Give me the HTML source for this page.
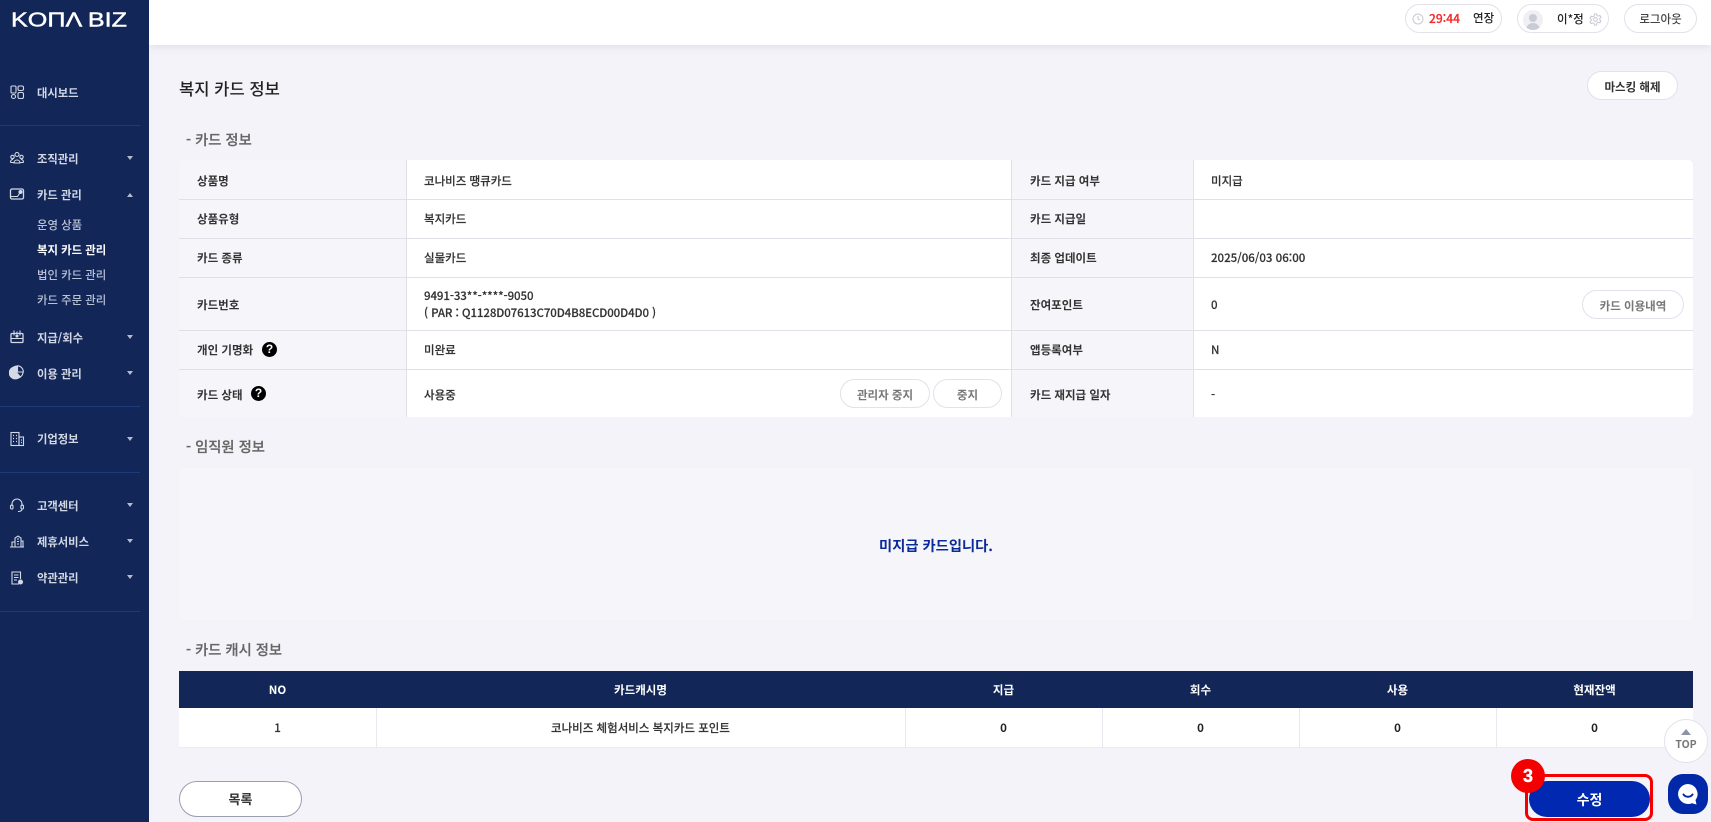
<!DOCTYPE html>
<html lang="ko">
<head>
<meta charset="utf-8">
<title>복지 카드 정보</title>
<style>
html,body{margin:0;padding:0;width:1711px;height:822px;overflow:hidden;background:#f3f3f9}
body{position:relative;font-family:"Liberation Sans","Noto Sans CJK KR",sans-serif;font-size:11.5px;color:#222}
div,span,svg{position:absolute;box-sizing:border-box}
.t{line-height:20px;height:20px;white-space:nowrap}
.k{font-family:"Noto Sans CJK KR","Liberation Sans",sans-serif}
.b{font-weight:700}
.c{text-align:center}
.side{left:0;top:0;width:149px;height:822px;background:#122658}
.sep{left:0;width:140px;height:1px;background:#1c3a7c}
.m{left:37px;color:#d3d8e5;font-weight:700;font-size:11.3px}
.s{left:37px;color:#b9c2d6;font-weight:500;font-size:11.4px}
.ar{left:127px;width:0;height:0;border-left:3.500px solid transparent;border-right:3.500px solid transparent;border-top:4px solid #b3bccf}
.ar.u{border-top:0;border-bottom:4px solid #b3bccf}
.ic{left:9px;width:16px;height:16px;fill:none;stroke:#d4d9e6;stroke-width:1.1}
.pill{border:1px solid #e1e2ea;border-radius:16px;background:#fff}
.th{background:#f6f6fa}
.hl{height:1px;background:#e0e0e8;left:179px;width:1514px}
.vl{width:1px;background:#e0e0e8}
.lab{color:#333;font-weight:700}
.val{color:#333;font-weight:500;-webkit-text-stroke:.15px #333}
.sec{left:186px;font-size:14.300px;color:#666;font-weight:500;-webkit-text-stroke:.2px #666}
.btxt{color:#777;font-weight:700;text-align:center}
.q{width:15px;height:15px;border-radius:50%;background:#000;color:#fff;text-align:center;font:700 12px/15px "Liberation Sans",sans-serif}
.w{color:#fff;font-weight:700;text-align:center}
</style>
</head>
<body>
<!-- top bar -->
<div style="left:149px;top:0;width:1562px;height:45px;background:#fff;box-shadow:0 2px 8px rgba(60,60,90,.10)"></div>

<!-- sidebar -->
<div class="side"></div>
<svg style="left:10px;top:8px" width="122" height="22"><text x="1" y="18.500" font-family="Liberation Sans" font-size="20.500" fill="#fff" stroke="#fff" stroke-width=".45" textLength="116" lengthAdjust="spacingAndGlyphs">KOΠΛ BIZ</text></svg>

<svg class="ic" style="top:84px" viewBox="0 0 16 16"><rect x="2" y="2" width="5" height="7" rx="1"/><circle cx="4.500" cy="12.500" r="2"/><rect x="9" y="2" width="5.500" height="4.500" rx="1.500"/><rect x="9" y="8.500" width="5.500" height="6" rx="1.500"/></svg>
<div class="t k m" style="top:83px">대시보드</div>
<div class="sep" style="top:125px"></div>

<svg class="ic" style="top:150px" viewBox="0 0 16 16"><circle cx="8" cy="4.500" r="2"/><circle cx="3.500" cy="7" r="1.700"/><circle cx="12.500" cy="7" r="1.700"/><path d="M1.500 12.500c0-2 1-3 2.500-3M14.500 12.500c0-2-1-3-2.500-3M5 13c0-4 6-4 6 0zM1.500 12.500H5M11 12.500h3.500"/></svg>
<div class="t k m" style="top:149px">조직관리</div>
<div class="ar" style="top:156px"></div>

<svg class="ic" style="top:186px" viewBox="0 0 16 16"><rect x="1.500" y="3" width="13" height="10" rx="1.500" stroke-width="1.300"/><path d="M1.500 10.500h7l2-3"/><circle cx="11.500" cy="6" r="1.500" fill="#d4d9e6"/></svg>
<div class="t k m" style="top:185px">카드 관리</div>
<div class="ar u" style="top:193px"></div>
<div class="t k s" style="top:215px">운영 상품</div>
<div class="t k" style="top:240px;left:37px;color:#fff;font-weight:700;font-size:11.400px">복지 카드 관리</div>
<div class="t k s" style="top:265px">법인 카드 관리</div>
<div class="t k s" style="top:290px">카드 주문 관리</div>

<svg class="ic" style="top:328px" viewBox="0 0 16 16"><rect x="2" y="5.500" width="12" height="9" rx="1" stroke-width="1.300"/><path d="M2 10.500h12M5 2.500v5M11 2.500v5M8 3.500v2"/><circle cx="8" cy="8" r="1" fill="#d4d9e6"/></svg>
<div class="t k m" style="top:328px">지급/회수</div>
<div class="ar" style="top:335px"></div>

<svg class="ic" style="top:364px" viewBox="0 0 16 16"><circle cx="8" cy="8" r="6"/><path d="M8.500 1.800v6.200h5.800A6 6 0 0 0 8.500 1.800z" fill="#122658"/><path d="M7.500 3v5.500l3.500 4A6 6 0 1 1 7.500 3z" fill="#d4d9e6"/></svg>
<div class="t k m" style="top:364px">이용 관리</div>
<div class="ar" style="top:371px"></div>
<div class="sep" style="top:406px"></div>

<svg class="ic" style="top:431px" viewBox="0 0 16 16"><rect x="2" y="1.500" width="8" height="13"/><rect x="10" y="6" width="4.500" height="8.500"/><path d="M4 4.500h1M7 4.500h1M4 7.500h1M7 7.500h1M4 10.500h1M7 10.500h1M12 9h1M12 11.500h1" stroke-width="1.300"/></svg>
<div class="t k m" style="top:429px">기업정보</div>
<div class="ar" style="top:437px"></div>
<div class="sep" style="top:472px"></div>

<svg class="ic" style="top:497px" viewBox="0 0 16 16"><path d="M3 9V7a5 5 0 0 1 10 0v2"/><rect x="1.500" y="8" width="2.500" height="4" rx="1.200"/><rect x="12" y="8" width="2.500" height="4" rx="1.200"/><path d="M13 12c0 2-2 2.500-4 2.500"/></svg>
<div class="t k m" style="top:496px">고객센터</div>
<div class="ar" style="top:503px"></div>

<svg class="ic" style="top:533px" viewBox="0 0 16 16"><path d="M1 14h14M3 14V9h3v5M6 14V5l3-2 3 2v9M12 14V8h2v6M8 6h2M8 8.500h2M8 11h2"/></svg>
<div class="t k m" style="top:532px">제휴서비스</div>
<div class="ar" style="top:539px"></div>

<svg class="ic" style="top:570px" viewBox="0 0 16 16"><path d="M10 14H3V2h8.500v7M5 5h4.500M5 7.500h4.500M5 10h3"/><circle cx="11.500" cy="12" r="2" fill="#d4d9e6"/></svg>
<div class="t k m" style="top:568px">약관관리</div>
<div class="ar" style="top:575px"></div>
<div class="sep" style="top:611px"></div>

<!-- header controls -->
<div class="pill" style="left:1405px;top:4px;width:97px;height:29px"></div>
<svg style="left:1412px;top:13px" width="12" height="12" viewBox="0 0 12 12" fill="none" stroke="#c9cad2"><circle cx="6" cy="6" r="5"/><path d="M6 3v3l2 1"/></svg>
<div class="t k" style="left:1429px;top:9px;color:#f42a2a;font-size:12px;font-weight:500;-webkit-text-stroke:.2px #f42a2a">29:44</div>
<div class="t k" style="left:1473px;top:8px;color:#222;font-weight:500">연장</div>

<div class="pill" style="left:1517px;top:4px;width:92px;height:29px"></div>
<div style="left:1523px;top:10px;width:20px;height:20px;border-radius:50%;background:#f0f0f4;overflow:hidden"><div style="left:6px;top:4px;width:8px;height:8px;border-radius:50%;background:#c9cbd6"></div><div style="left:3px;top:13px;width:14px;height:9px;border-radius:7px 7px 0 0;background:#c9cbd6"></div></div>
<div class="t k" style="left:1557px;top:9px;font-weight:500">이*정</div>
<svg style="left:1589px;top:13px" width="13" height="13" viewBox="0 0 14 14" fill="none" stroke="#c4c5ce"><path d="M5.800 1h2.400l.4 1.700 1.500.7 1.600-.8 1.200 2-1.300 1.200v1.600l1.300 1.200-1.200 2-1.600-.8-1.500.7L8.200 13H5.800l-.4-1.700-1.500-.7-1.600.8-1.200-2 1.300-1.200V6.600L1.100 5.400l1.200-2 1.600.8 1.500-.7z"/><circle cx="7" cy="7" r="2"/></svg>

<div class="pill" style="left:1624px;top:4px;width:73px;height:29px"></div>
<div class="t k c" style="left:1624px;top:9px;width:73px;color:#444;font-weight:500">로그아웃</div>

<!-- title -->
<div class="t k" style="left:179px;top:78px;font-size:16.600px;font-weight:500;color:#222">복지 카드 정보</div>
<div class="pill" style="left:1587px;top:71px;width:91px;height:29px"></div>
<div class="t k c b" style="left:1587px;top:77px;width:91px;color:#333">마스킹 해제</div>

<!-- card info -->
<div class="t k sec" style="top:130px">- 카드 정보</div>
<div style="left:179px;top:160px;width:1514px;height:257px;background:#fff;border-radius:5px;overflow:hidden">
  <div class="th" style="left:0;top:0;width:227px;height:257px"></div>
  <div class="th" style="left:832px;top:0;width:183px;height:257px"></div>
</div>
<div class="hl" style="top:199px"></div>
<div class="hl" style="top:238px"></div>
<div class="hl" style="top:277px"></div>
<div class="hl" style="top:330px"></div>
<div class="hl" style="top:369px"></div>
<div class="vl" style="left:406px;top:160px;height:257px"></div>
<div class="vl" style="left:1011px;top:160px;height:257px"></div>
<div class="vl" style="left:1193px;top:160px;height:257px"></div>

<div class="t k lab" style="left:197px;top:171px">상품명</div>
<div class="t k val" style="left:424px;top:171px">코나비즈 땡큐카드</div>
<div class="t k lab" style="left:1030px;top:171px">카드 지급 여부</div>
<div class="t k val" style="left:1211px;top:171px">미지급</div>

<div class="t k lab" style="left:197px;top:209px">상품유형</div>
<div class="t k val" style="left:424px;top:209px">복지카드</div>
<div class="t k lab" style="left:1030px;top:209px">카드 지급일</div>

<div class="t k lab" style="left:197px;top:248px">카드 종류</div>
<div class="t k val" style="left:424px;top:248px">실물카드</div>
<div class="t k lab" style="left:1030px;top:248px">최종 업데이트</div>
<div class="t k val" style="left:1211px;top:248px">2025/06/03 06:00</div>

<div class="t k lab" style="left:197px;top:295px">카드번호</div>
<div class="t k val" style="left:424px;top:286px;letter-spacing:-.1px">9491-33**-****-9050</div>
<div class="t k val" style="left:424px;top:303px;letter-spacing:-.1px">( PAR : Q1128D07613C70D4B8ECD00D4D0 )</div>
<div class="t k lab" style="left:1030px;top:295px">잔여포인트</div>
<div class="t k val b" style="left:1211px;top:295px">0</div>
<div class="pill" style="left:1582px;top:290px;width:102px;height:29px"></div>
<div class="t k btxt" style="left:1582px;top:296px;width:102px">카드 이용내역</div>

<div class="t k lab" style="left:197px;top:340px">개인 기명화</div>
<div class="q" style="left:262px;top:342px">?</div>
<div class="t k val" style="left:424px;top:340px">미완료</div>
<div class="t k lab" style="left:1030px;top:340px">앱등록여부</div>
<div class="t k val b" style="left:1211px;top:340px">N</div>

<div class="t k lab" style="left:197px;top:385px">카드 상태</div>
<div class="q" style="left:251px;top:386px">?</div>
<div class="t k val" style="left:424px;top:385px">사용중</div>
<div class="pill" style="left:840px;top:379px;width:90px;height:29px"></div>
<div class="t k btxt" style="left:840px;top:385px;width:90px">관리자 중지</div>
<div class="pill" style="left:933px;top:379px;width:69px;height:29px"></div>
<div class="t k btxt" style="left:933px;top:385px;width:69px">중지</div>
<div class="t k lab" style="left:1030px;top:385px">카드 재지급 일자</div>
<div class="t k val" style="left:1211px;top:385px">-</div>

<!-- employee -->
<div class="t k sec" style="top:437px">- 임직원 정보</div>
<div style="left:179px;top:468px;width:1514px;height:152px;background:#f6f6fa;border-radius:5px"></div>
<div class="t k c b" style="left:179px;top:536px;width:1514px;font-size:14.300px;color:#0b2a9a">미지급 카드입니다.</div>

<!-- cash table -->
<div class="t k sec" style="top:640px">- 카드 캐시 정보</div>
<div style="left:179px;top:671px;width:1514px;height:37px;background:#122658"></div>
<div style="left:179px;top:708px;width:1514px;height:40px;background:#fff;border-bottom:1px solid #ebebf0"></div>
<div class="vl" style="left:376px;top:708px;height:40px;background:#e8e8ee"></div>
<div class="vl" style="left:905px;top:708px;height:40px;background:#e8e8ee"></div>
<div class="vl" style="left:1102px;top:708px;height:40px;background:#e8e8ee"></div>
<div class="vl" style="left:1299px;top:708px;height:40px;background:#e8e8ee"></div>
<div class="vl" style="left:1496px;top:708px;height:40px;background:#e8e8ee"></div>

<div class="t k w" style="left:179px;top:680px;width:197px">NO</div>
<div class="t k w" style="left:376px;top:680px;width:529px">카드캐시명</div>
<div class="t k w" style="left:905px;top:680px;width:197px">지급</div>
<div class="t k w" style="left:1102px;top:680px;width:197px">회수</div>
<div class="t k w" style="left:1299px;top:680px;width:197px">사용</div>
<div class="t k w" style="left:1496px;top:680px;width:197px">현재잔액</div>

<div class="t k c val" style="left:179px;top:718px;width:197px">1</div>
<div class="t k c val" style="left:376px;top:718px;width:529px">코나비즈 체험서비스 복지카드 포인트</div>
<div class="t k c b" style="left:905px;top:718px;width:197px">0</div>
<div class="t k c b" style="left:1102px;top:718px;width:197px">0</div>
<div class="t k c b" style="left:1299px;top:718px;width:197px">0</div>
<div class="t k c b" style="left:1496px;top:718px;width:197px">0</div>

<!-- bottom buttons -->
<div style="left:179px;top:781px;width:123px;height:36px;background:#fff;border:1px solid #9a9fb0;border-radius:18px"></div>
<div class="t k c" style="left:179px;top:789px;width:123px;font-size:13px;font-weight:700;color:#333">목록</div>

<div style="left:1529px;top:781px;width:121px;height:36px;background:#0028b0;border-radius:18px"></div>
<div class="t k w" style="left:1529px;top:790px;width:121px;font-size:14px">수정</div>
<div style="left:1525px;top:774px;width:128px;height:47px;border:3px solid #f40000;border-radius:8px"></div>
<div style="left:1511px;top:759px;width:34px;height:34px;border-radius:50%;background:#f40000"></div>
<div class="t b c" style="left:1511px;top:766px;width:34px;color:#fff;font-size:18px;-webkit-text-stroke:.4px #fff">3</div>

<!-- floating -->
<div style="left:1664px;top:719px;width:44px;height:44px;border-radius:50%;background:#fff;border:1px solid #e1e2ea"></div>
<div style="left:1681px;top:729px;width:0;height:0;border-left:5px solid transparent;border-right:5px solid transparent;border-bottom:6px solid #8d92a5"></div>
<div class="t k b c" style="left:1664px;top:735px;width:44px;font-size:10.500px;color:#777">TOP</div>
<div style="left:1668px;top:774px;width:40px;height:40px;border-radius:15px;background:#0028a8"></div>
<svg style="left:1676px;top:782px" width="24" height="24" viewBox="0 0 24 24"><path d="M12 2a10 10 0 1 0 4 19.200l4.500 1.300-1-4.500A10 10 0 0 0 12 2z" fill="#fff"/><path d="M7.500 12.500c2 3 7 3 9 0" fill="none" stroke="#0028a8" stroke-width="2" stroke-linecap="round"/></svg>
</body>
</html>
